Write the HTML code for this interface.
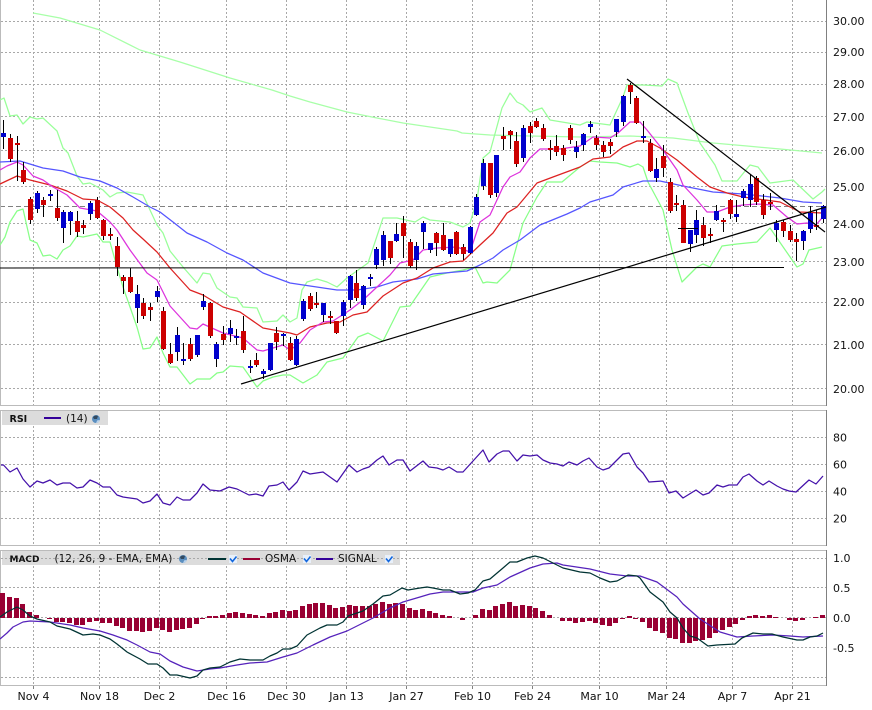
<!DOCTYPE html>
<html><head><meta charset="utf-8"><style>
html,body{margin:0;padding:0;background:#fff}
svg{display:block;font-family:"DejaVu Sans","Liberation Sans",sans-serif}
text{font-size:11px;fill:#111}
.g{stroke:#a8a8a8;stroke-width:1;stroke-dasharray:2 2;fill:none}
.l{fill:none;stroke-width:1.25;stroke-linejoin:round}
.c{shape-rendering:crispEdges;fill:none}
.s{font-size:10.5px}
.b{font-size:9.5px;font-weight:bold}
</style></head><body>
<svg width="872" height="710" viewBox="0 0 872 710" xmlns="http://www.w3.org/2000/svg">
<rect width="872" height="710" fill="#fff"/>

<!-- vertical grids -->
<path class="g" shape-rendering="crispEdges" d="M33.5 0V405M99.5 0V405M159.5 0V405M226.5 0V405M286.5 0V405M346.5 0V405M406.5 0V405M472.5 0V405M532.5 0V405M599.5 0V405M666.5 0V405M732.5 0V405M792.5 0V405"/>
<path class="g" shape-rendering="crispEdges" d="M33.5 410V545M99.5 410V545M159.5 410V545M226.5 410V545M286.5 410V545M346.5 410V545M406.5 410V545M472.5 410V545M532.5 410V545M599.5 410V545M666.5 410V545M732.5 410V545M792.5 410V545"/>
<path class="g" shape-rendering="crispEdges" d="M33.5 550V685M99.5 550V685M159.5 550V685M226.5 550V685M286.5 550V685M346.5 550V685M406.5 550V685M472.5 550V685M532.5 550V685M599.5 550V685M666.5 550V685M732.5 550V685M792.5 550V685"/>
<!-- ticks -->
<path stroke="#808080" shape-rendering="crispEdges" d="M33.5 685V689M99.5 685V689M159.5 685V689M226.5 685V689M286.5 685V689M346.5 685V689M406.5 685V689M472.5 685V689M532.5 685V689M599.5 685V689M666.5 685V689M732.5 685V689M792.5 685V689"/>
<!-- horizontal grids -->
<path class="g" shape-rendering="crispEdges" d="M1 21.5H826M1 52.5H826M1 84.5H826M1 116.5H826M1 150.5H826M1 186.5H826M1 223.5H826M1 261.5H826M1 302.5H826M1 344.5H826M1 388.5H826M1 437.5H826M1 464.5H826M1 491.5H826M1 518.5H826M1 587.5H826M1 617.5H826M1 647.5H826M1 677.5H826"/>
<path d="M0 206.5H826" stroke="#808080" stroke-dasharray="5 3" shape-rendering="crispEdges" fill="none"/>

<!-- legends bg -->
<rect x="2" y="411" width="106" height="14" fill="#dcdcdc"/>
<rect x="2" y="551" width="398" height="14" fill="#dcdcdc"/>
<path class="g" shape-rendering="crispEdges" d="M1 558.5H826"/>

<!-- frames -->
<path stroke="#bbb" fill="none" shape-rendering="crispEdges" d="M0.5 0V405M0 405.5H826M0.5 410V545M0 410.5H826M0 545.5H826M0.5 550V685M0 550.5H826M0 685.5H826"/>
<path stroke="#808080" fill="none" shape-rendering="crispEdges" d="M826.5 0V406M826.5 410V546M826.5 550V686"/>

<!-- MA long -->
<polyline class="l" stroke="#a8ffa8" points="33,13 60,18 100,30 140,50 180,62 230,78 272,90 290,96 310,102 347,112 377,118 403,123 457,131 462,133 490,135 530,136 580,137 630,136 673,138 713,143 747,146 780,149 822,153"/>
<!-- upper band -->
<polyline class="l" stroke="#99ff99" points="0,100 4,98 10,116 17,115 23,124 30,117 37,119 43,118 57,131 63,148 68,153 77,176 83,184 90,183 103,190 110,197 117,193 127,192 143,195 157,225 163,233 170,251 183,267 197,283 203,273 210,274 217,288 230,297 237,298 243,307 257,308 263,322 277,321 283,315 290,322 297,318 302,290 307,282 317,279 327,282 337,287 347,278 368,263 383,218 397,218 415,222 423,217 430,220 450,222 463,227 470,223 477,200 483,158 490,152 502,108 510,93 517,102 523,105 530,112 542,108 550,120 580,125 587,122 610,125 623,97 627,85 643,85 662,86 668,79 677,83 688,113 700,143 715,165 722,181 737,181 750,165 758,167 770,183 793,180 813,199 822,192 825,189"/>
<!-- lower band -->
<polyline class="l" stroke="#88ff88" points="0,245 5,237 10,222 17,211 23,209 30,240 37,243 43,256 50,255 57,259 63,250 70,246 77,236 83,237 97,234 103,242 110,242 117,267 123,287 137,327 143,349 150,348 157,337 163,353 170,367 177,367 190,384 197,379 210,379 217,373 223,372 230,366 243,367 257,387 263,381 273,377 283,375 290,375 303,383 317,375 327,362 343,358 358,337 368,333 383,341 400,307 410,306 430,277 447,273 463,270 475,267 483,283 487,282 497,283 510,270 523,223 537,197 547,182 562,182 580,167 590,161 600,162 617,163 630,167 638,164 643,167 648,182 663,210 672,250 682,282 697,267 703,264 710,267 722,246 737,244 757,242 770,228 797,267 803,264 809,250 822,247"/>
<!-- blue MA -->
<polyline class="l" stroke="#5555ff" points="0,162 20,161 43,168 63,171 80,177 100,181 117,188 133,197 150,207 160,212 173,222 187,233 207,242 227,253 243,260 263,273 290,283 310,286 337,290 357,290 377,287 393,282 417,279 433,274 467,271 480,265 493,258 503,250 520,240 540,225 567,214 580,208 590,202 613,195 623,187 643,181 660,181 683,186 713,192 743,194 780,198 803,202 822,203"/>
<!-- red MA -->
<polyline class="l" stroke="#dd2222" points="0,184 17,176 30,180 50,185 67,191 83,199 97,200 110,207 123,218 133,230 143,239 157,252 170,268 190,290 203,295 223,307 240,312 263,328 290,333 297,335 310,327 327,323 340,322 353,315 367,312 383,296 403,283 417,278 433,268 450,262 463,261 480,245 493,233 507,213 517,207 537,183 553,177 580,167 593,159 610,157 623,147 637,141 647,141 660,148 677,160 697,177 710,187 727,193 743,197 780,202 800,212 822,213"/>
<!-- magenta MA -->
<polyline class="l" stroke="#dd33dd" points="0,170 7,166 17,162 23,165 33,176 43,180 53,187 67,195 80,208 97,211 110,222 117,230 130,250 147,273 157,280 170,306 190,328 197,329 203,324 223,333 243,338 257,350 263,351 283,345 290,350 300,343 310,330 323,322 333,321 350,310 363,300 377,287 390,275 400,263 413,260 423,250 437,248 457,247 470,252 480,222 490,215 503,187 510,177 520,172 530,158 540,149 560,149 580,146 593,137 610,138 618,133 630,122 640,122 647,130 663,150 677,170 683,185 697,200 707,212 717,212 730,207 743,205 757,204 773,205 787,217 797,224 807,223 815,226 822,218"/>

<!-- wicks -->
<path class="c" stroke="#000" d="M3.5 120V149M10.5 134V162M17.5 136V181M23.5 162V184M30.5 197V224M37.5 191V213M43.5 197V217M50.5 190V201M57.5 190V221M63.5 210V243M70.5 211V235M77.5 211V237M83.5 220V234M90.5 201V220M97.5 197V219M103.5 219V240M110.5 228V240M117.5 237V276M123.5 275V294M130.5 268V293M137.5 285V323M143.5 298V319M150.5 303V321M157.5 286V302M163.5 307V350M170.5 343V364M177.5 327V361M183.5 343V365M190.5 338V361M197.5 335V357M203.5 294V310M210.5 302V338M216.5 342V367M223.5 326V345M230.5 320V342M236.5 329V345M243.5 316V353M250.5 360V373M256.5 353V367M263.5 369V379M270.5 343V371M276.5 327V350M283.5 333V346M290.5 337V361M296.5 336V366M303.5 299V321M310.5 293V311M316.5 292V308M323.5 303V322M330.5 311V324M336.5 321V334M343.5 300V326M350.5 275V308M356.5 270V301M363.5 285V309M370.5 274V286M376.5 247V269M383.5 231V266M390.5 241V264M396.5 223V242M403.5 216V258M410.5 239V268M416.5 242V270M423.5 221V249M430.5 243V253M436.5 232V256M443.5 223V251M450.5 239V257M456.5 231V255M463.5 244V260M470.5 226V254M476.5 194V216M483.5 159V190M490.5 163V198M496.5 155V197M503.5 127V150M510.5 130V149M516.5 132V167M523.5 125V162M530.5 122V143M536.5 118V128M543.5 124V141M550.5 140V160M556.5 135V156M563.5 145V161M570.5 125V144M576.5 141V158M583.5 133V151M590.5 121V133M596.5 135V150M603.5 141V157M610.5 139V154M616.5 119V137M623.5 95V126M630.5 83V104M636.5 96V124M643.5 121V143M650.5 139V172M656.5 158V182M663.5 145V177M670.5 178V213M676.5 195V211M683.5 200V243M690.5 230V252M696.5 210V243M703.5 217V246M710.5 228V243M716.5 205V221M723.5 218V232M730.5 199V219M736.5 200V222M743.5 189V206M750.5 174V207M756.5 176V205M763.5 194V219M770.5 193V210M776.5 220V242M783.5 220V237M790.5 225V242M796.5 233V261M803.5 230V250M810.5 206V233M816.5 210V230M823.5 205V223"/>
<!-- red bodies -->
<path class="c" stroke="#cc0000" stroke-width="5" d="M10.5 138V159M17.5 143V145M23.5 170V182M30.5 199V220M43.5 200V205M57.5 208V218M77.5 221V232M83.5 225V228M97.5 200V218M103.5 220V236M110.5 234V236M117.5 246V267M123.5 277V281M130.5 277V292M143.5 303V316M150.5 307V310M163.5 311V349M170.5 354V363M190.5 344V359M210.5 303V336M223.5 334V340M243.5 331V350M256.5 360V365M276.5 333V342M290.5 343V360M310.5 296V309M316.5 303V305M330.5 316V318M336.5 321V333M356.5 283V298M390.5 241V258M403.5 223V236M410.5 242V266M436.5 233V243M443.5 235V250M456.5 232V254M463.5 247V254M490.5 163V195M503.5 136V139M510.5 131V135M516.5 141V164M530.5 126V133M536.5 121V127M543.5 128V139M550.5 148V150M556.5 146V152M563.5 148V155M570.5 128V140M596.5 138V145M603.5 145V152M610.5 142V146M630.5 85V92M636.5 98V123M650.5 143V171M663.5 156V168M670.5 182V211M676.5 203V205M683.5 205V243M703.5 225V238M710.5 234V236M723.5 220V222M730.5 200V214M756.5 178V202M763.5 200V215M770.5 202V204M783.5 222V231M790.5 231V240M796.5 239V242M816.5 225V227"/>
<!-- blue bodies -->
<path class="c" stroke="#0000cc" stroke-width="5" d="M3.5 133V137M37.5 193V209M50.5 194V196M63.5 212V228M70.5 212V221M90.5 203V214M137.5 294V308M157.5 291V297M177.5 335V352M183.5 359V361M197.5 335V355M203.5 301V307M216.5 344V359M230.5 328V334M236.5 336V338M250.5 366V368M263.5 371V374M270.5 343V370M283.5 334V336M296.5 339V365M303.5 301V319M323.5 303V315M343.5 302V316M350.5 276V300M363.5 286V305M370.5 277V279M376.5 249V265M383.5 235V260M396.5 234V241M416.5 246V260M423.5 223V232M430.5 243V250M450.5 239V254M470.5 227V253M476.5 197V215M483.5 163V186M496.5 155V193M523.5 128V158M576.5 147V152M583.5 134V145M590.5 124V127M616.5 119V132M623.5 96V122M643.5 136V138M656.5 169V178M690.5 230V244M696.5 220V235M716.5 211V220M736.5 214V217M743.5 191V198M750.5 184V200M776.5 223V230M803.5 231V241M810.5 213V229M823.5 206V219"/>

<!-- horizontal + trend lines -->
<line x1="0" y1="268" x2="784" y2="267.5" stroke="#000" stroke-width="1"/>
<line x1="241" y1="384" x2="826" y2="207" stroke="#000" stroke-width="1.2"/>
<line x1="627" y1="79" x2="825" y2="232" stroke="#000" stroke-width="1.2"/>
<path d="M678 228.5H698" stroke="#000" shape-rendering="crispEdges"/>

<!-- RSI line -->
<polyline class="l" stroke="#4411aa" points="1,465 3.5,465 10,472 17,468 23,479 30,487 37,481 43,483 50,480 57,485 63,483 70,483 77,488 83,487 90,480 97,483 103,487 110,487 117,495 123,497 130,498 137,499 143,503 150,501 157,494 163,503 170,505 177,497 183,500 190,500 197,493 203,484 210,490 220,491 229,487 237,489 249,495 256,494 263,496 269,486 277,485 283,482 289,490 297,482 303,471 310,474 323,472 337,482 349,465 357,472 363,469 369,467 377,460 383,456 389,465 397,460 403,460 410,471 423,461 429,467 437,468 443,470 449,467 457,472 463,472 483,450 489,462 497,454 503,451 509,451 517,461 523,455 530,456 537,455 543,460 550,463 557,464 563,466 569,462 577,465 583,461 589,458 597,467 603,470 609,468 623,454 629,453 637,467 643,473 649,482 663,481 669,493 676,491 683,498 696,490 703,495 709,493 717,485 723,487 729,485 737,485 743,477 749,474 757,481 763,485 769,481 777,486 783,489 789,491 796,492 809,480 816,484 823,476"/>

<!-- OSMA bars -->
<g transform="translate(-1,0)">
<path class="c" stroke="#990033" stroke-width="5" d="M3.5 618V593M10.5 618V597M17.5 618V598M23.5 618V604M30.5 618V612M37.5 618V615M50.5 618V619M57.5 618V622M63.5 618V622M70.5 618V623M77.5 618V625M83.5 618V625M90.5 618V622M97.5 618V621M103.5 618V623M110.5 618V623M117.5 618V626M123.5 618V628M130.5 618V631M137.5 618V631M143.5 618V632M150.5 618V631M157.5 618V628M163.5 618V630M170.5 618V632M177.5 618V630M183.5 618V629M190.5 618V628M197.5 618V624M203.5 618V619M210.5 618V616M216.5 618V616M223.5 618V615M230.5 618V613M236.5 618V612M243.5 618V613M250.5 618V614M256.5 618V615M263.5 618V616M270.5 618V613M276.5 618V612M283.5 618V610M290.5 618V611M296.5 618V610M303.5 618V606M310.5 618V604M316.5 618V603M323.5 618V603M330.5 618V605M336.5 618V608M343.5 618V607M350.5 618V605M356.5 618V606M363.5 618V606M370.5 618V606M376.5 618V604M383.5 618V602M390.5 618V604M396.5 618V603M403.5 618V604M410.5 618V608M416.5 618V610M423.5 618V609M430.5 618V611M436.5 618V613M443.5 618V615M450.5 618V616M463.5 618V620M476.5 618V615M483.5 618V609M490.5 618V610M496.5 618V606M503.5 618V604M510.5 618V602M516.5 618V606M523.5 618V605M530.5 618V606M536.5 618V608M543.5 618V611M550.5 618V615M563.5 618V621M570.5 618V621M576.5 618V623M583.5 618V622M590.5 618V621M596.5 618V623M603.5 618V625M610.5 618V626M616.5 618V623M623.5 618V619M630.5 618V616M636.5 618V619M643.5 618V622M650.5 618V628M656.5 618V631M663.5 618V633M670.5 618V638M676.5 618V639M683.5 618V643M690.5 618V643M696.5 618V641M703.5 618V640M710.5 618V638M716.5 618V633M723.5 618V630M730.5 618V627M736.5 618V624M743.5 618V620M750.5 618V616M756.5 618V615M763.5 618V616M770.5 618V615M776.5 618V617M790.5 618V620M796.5 618V621M803.5 618V620M816.5 618V617M823.5 618V615"/>
</g>

<!-- Signal -->
<polyline class="l" stroke="#5522bb" points="0,639 7,633 13,627 23,622 30,621 50,622 70,625 83,628 100,631 113,635 127,640 137,645 150,652 160,654 170,661 183,667 197,671 210,669 220,668 237,665 250,663 267,662 283,657 297,653 313,645 330,637 347,631 373,618 390,608 403,602 420,597 430,594 443,592 473,592 483,588 497,585 510,577 530,568 543,564 557,563 563,565 590,569 610,574 627,576 640,576 657,582 677,597 683,604 700,619 720,632 737,637 753,636 773,635 790,636 803,637 823,636"/>
<!-- MACD -->
<polyline class="l" stroke="#003333" points="0,617 7,612 17,607 23,610 30,616 37,619 50,622 57,626 70,629 83,635 93,634 100,635 110,639 117,644 127,652 140,659 148,664 157,664 163,668 170,675 177,675 190,678 197,676 203,670 210,668 220,667 230,662 240,659 250,660 263,660 270,656 277,653 283,649 290,649 297,646 307,635 320,628 327,625 337,625 343,622 348,616 363,611 373,604 383,596 390,595 402,588 408,590 420,588 427,587 433,588 443,590 450,590 460,594 468,593 475,590 483,581 490,579 503,568 510,562 517,562 527,558 535,556 543,558 553,563 563,568 580,572 590,573 600,578 610,582 617,581 628,575 637,576 640,578 650,592 663,602 670,612 677,618 683,628 690,636 697,638 708,646 717,645 735,644 742,638 753,633 763,634 772,634 783,637 797,640 803,640 810,637 817,636 823,633"/>

<!-- axis labels -->
<g>
<text x="833" y="25">30.00</text><text x="833" y="56">29.00</text><text x="833" y="88">28.00</text><text x="833" y="121">27.00</text><text x="833" y="155">26.00</text><text x="833" y="191">25.00</text><text x="833" y="228">24.00</text><text x="833" y="266">23.00</text><text x="833" y="306">22.00</text><text x="833" y="349">21.00</text><text x="833" y="393">20.00</text>
<text x="833" y="441.5">80</text><text x="833" y="468.5">60</text><text x="833" y="495.5">40</text><text x="833" y="522.5">20</text>
<text x="833" y="562">1.0</text><text x="833" y="592">0.5</text><text x="833" y="622">0.0</text><text x="833" y="652">-0.5</text>
</g>
<g text-anchor="middle">
<text x="33.5" y="700">Nov 4</text><text x="99.5" y="700">Nov 18</text><text x="159.5" y="700">Dec 2</text><text x="226.5" y="700">Dec 16</text><text x="286.5" y="700">Dec 30</text><text x="346.5" y="700">Jan 13</text><text x="406.5" y="700">Jan 27</text><text x="472.5" y="700">Feb 10</text><text x="532.5" y="700">Feb 24</text><text x="599.5" y="700">Mar 10</text><text x="666.5" y="700">Mar 24</text><text x="732.5" y="700">Apr 7</text><text x="792.5" y="700">Apr 21</text>
</g>

<!-- RSI legend -->
<text class="b" x="9.5" y="422">RSI</text>
<rect x="44" y="417" width="17" height="2" fill="#330099"/>
<text class="s" x="66" y="422">(14)</text>
<circle cx="96" cy="419" r="4" fill="#5b8fc0"/><path d="M93 417.5a3.6 3.6 0 0 1 5-1.5l-1 3h-3z" fill="#334a60"/><path d="M96 423a4 4 0 0 0 3.8-3l-2.6 .4z" fill="#bcd4ec"/>

<!-- MACD legend -->
<text class="b" x="9.5" y="562" style="font-size:9px">MACD</text>
<text class="s" x="54.5" y="562">(12, 26, 9 - EMA, EMA)</text>
<circle cx="183" cy="559" r="4" fill="#5b8fc0"/><path d="M180 557.5a3.6 3.6 0 0 1 5-1.5l-1 3h-3z" fill="#334a60"/><path d="M183 563a4 4 0 0 0 3.8-3l-2.6 .4z" fill="#bcd4ec"/>
<rect x="208" y="558" width="18" height="2" fill="#003333"/>
<rect x="229" y="555" width="8" height="8" fill="#e8f0fa"/><path d="M230 558.5l2.5 3 4-5" fill="none" stroke="#1166dd" stroke-width="1.6"/>
<rect x="243" y="558" width="17" height="2" fill="#990033"/>
<text class="s" x="265" y="562">OSMA</text>
<rect x="303" y="555" width="8" height="8" fill="#e8f0fa"/><path d="M304 558.5l2.5 3 4-5" fill="none" stroke="#1166dd" stroke-width="1.6"/>
<rect x="316" y="558" width="17" height="2" fill="#330099"/>
<text class="s" x="338" y="562">SIGNAL</text>
<rect x="385" y="555" width="8" height="8" fill="#e8f0fa"/><path d="M386 558.5l2.5 3 4-5" fill="none" stroke="#1166dd" stroke-width="1.6"/>
</svg>
</body></html>
